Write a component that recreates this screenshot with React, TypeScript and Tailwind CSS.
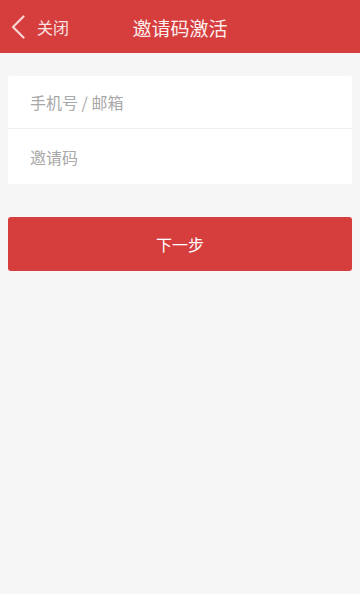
import { useState } from 'react';

export default function App() {
    const [phone, setPhone] = useState('');
    const [code, setCode] = useState('');

    return (
        <div
            className="min-h-[594px] w-full bg-[#f6f6f6]"
            style={{ fontFamily: '"Noto Sans CJK SC", "Noto Sans", sans-serif' }}
        >
            {/* Header */}
            <div className="relative flex h-[53px] items-center bg-[#d63d3d] text-white">
                <button className="flex items-center pl-[11px] text-white">
                    <svg width="14" height="24" viewBox="0 0 14 24" fill="none">
                        <path d="M12.5 1.5 L2 12 L12.5 22.5" stroke="#f7d5d5" strokeWidth="2.2" strokeLinecap="round" strokeLinejoin="round" />
                    </svg>
                    <span className="ml-[12px] text-[16px] leading-none text-[#fbe3e3]">关闭</span>
                </button>
                <h1 className="absolute left-1/2 top-1/2 -translate-x-1/2 -translate-y-1/2 text-[19px] font-normal leading-none text-[#fdeeee]">
                    邀请码激活
                </h1>
            </div>

            {/* Form */}
            <div className="mx-[8px] mt-[23px] rounded-[3px] bg-white">
                <div className="flex h-[53px] items-center border-b border-[#efefef] px-[22px]">
                    <input
                        value={phone}
                        onChange={(e) => setPhone(e.target.value)}
                        placeholder="手机号 / 邮箱"
                        className="w-full bg-transparent text-[16px] text-[#333] outline-none placeholder:text-[#a8a8a8]"
                    />
                </div>
                <div className="flex h-[55px] items-center px-[22px]">
                    <input
                        value={code}
                        onChange={(e) => setCode(e.target.value)}
                        placeholder="邀请码"
                        className="w-full bg-transparent text-[16px] text-[#333] outline-none placeholder:text-[#a8a8a8]"
                    />
                </div>
            </div>

            <div className="mx-[8px] mt-[33px]">
                <button className="flex h-[54px] w-full items-center justify-center rounded-[3px] bg-[#d63d3d] text-[16px] text-white">
                    下一步
                </button>
            </div>
        </div>
    );
}
